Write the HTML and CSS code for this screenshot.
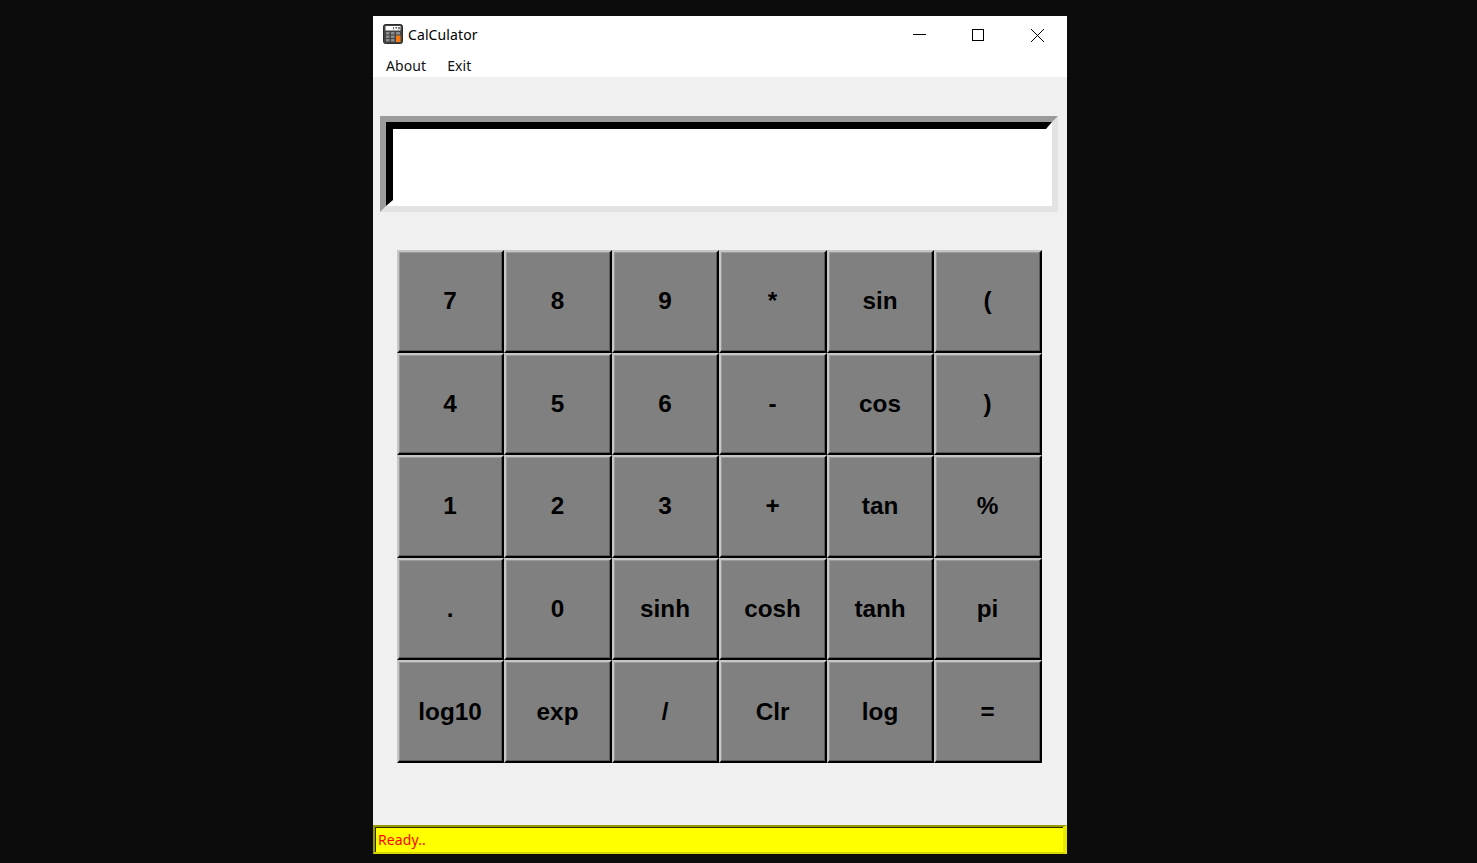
FILE: index.html
```html
<!DOCTYPE HTML>
<html>
<head>
<meta http-equiv="Content-Type" content="text/html; charset=utf-8">
<title>CalCulator</title>
<link rel="stylesheet" href="styles.css">
</head>
<body>
	<div id="window">
		<div id="titlebar">
			<svg class="appicon" width="20" height="20" viewBox="0 0 20 20">
				<rect x="0.5" y="0.5" width="19" height="19" rx="2" fill="#444" stroke="#2b2b2b"/>
				<rect x="2.5" y="2" width="15" height="4.5" fill="#fff"/>
				<path d="M10.5 3v2.5M12.5 3.5h1.5M13.2 3v2M15 3l2 2.5M17 3l-2 2.5" stroke="#333" stroke-width="0.7" fill="none"/>
				<rect x="3" y="8" width="3.5" height="2.5" fill="#8c8c8c"/>
				<rect x="8" y="8" width="3.5" height="2.5" fill="#8c8c8c"/>
				<rect x="13" y="8" width="4" height="2.5" fill="#8c8c8c"/>
				<rect x="3" y="11.5" width="3.5" height="2.5" fill="#8c8c8c"/>
				<rect x="8" y="11.5" width="3.5" height="2.5" fill="#8c8c8c"/>
				<rect x="3" y="15" width="3.5" height="2.5" fill="#8c8c8c"/>
				<rect x="8" y="15" width="3.5" height="2.5" fill="#8c8c8c"/>
				<rect x="13" y="11.5" width="4.5" height="6.5" fill="#f47a10"/>
			</svg>
			<span class="title">CalCulator</span>
			<div class="controls">
				<svg width="58" height="36" viewBox="0 0 58 36"><path d="M22 18.5h13" stroke="#000" fill="none"/></svg>
				<svg width="58" height="36" viewBox="0 0 58 36"><rect x="23.5" y="13.5" width="11" height="11" stroke="#000" fill="none"/></svg>
				<svg width="58" height="36" viewBox="0 0 58 36"><path d="M24 13l13 13M37 13l-13 13" stroke="#000" fill="none"/></svg>
			</div>
		</div>
		<ul id="menu">
			<li>About</li>
			<li>Exit</li>
		</ul>
		<div id="content">
			<div id="display"><div class="inner"></div></div>
			<div id="keys">
				<div class="button">7</div>
				<div class="button">8</div>
				<div class="button">9</div>
				<div class="button">*</div>
				<div class="button">sin</div>
				<div class="button">(</div>
				<div class="button">4</div>
				<div class="button">5</div>
				<div class="button">6</div>
				<div class="button">-</div>
				<div class="button">cos</div>
				<div class="button">)</div>
				<div class="button">1</div>
				<div class="button">2</div>
				<div class="button">3</div>
				<div class="button">+</div>
				<div class="button">tan</div>
				<div class="button">%</div>
				<div class="button">.</div>
				<div class="button">0</div>
				<div class="button">sinh</div>
				<div class="button">cosh</div>
				<div class="button">tanh</div>
				<div class="button">pi</div>
				<div class="button">log10</div>
				<div class="button">exp</div>
				<div class="button">/</div>
				<div class="button">Clr</div>
				<div class="button">log</div>
				<div class="button">=</div>
			</div>
		</div>
		<div id="status">Ready..</div>
	</div>
</body>
</html>
```

FILE: styles.css
```css
html,body{margin: 0;padding: 0;height: 100%;}
body{
	background: #0c0c0c;
	font-family: "Noto Sans","Open Sans",sans-serif;
	overflow: hidden;
}
#window{
	width: 694px;
	height: 838px;
	margin: 16px 0 0 373px;
	display: flex;
	flex-direction: column;
	background: #f0f0f0;
}
#titlebar{
	height: 36px;
	background: #fff;
	display: flex;
	align-items: center;
	padding: 0 1px 0 10px;
	font-size: 14px;
	letter-spacing: 0.1px;
	color: #000;
}
.appicon{margin-right: 5px;}
.controls{
	margin-left: auto;
	display: flex;
	height: 36px;
	padding-right: 1px;
}
.controls svg{display: block;}
#menu{
	height: 25px;
	margin: 0;
	padding: 0 0 0 13px;
	background: #fff;
	list-style: none;
	display: flex;
	gap: 21px;
	font-size: 14px;
	letter-spacing: 0.1px;
	line-height: 28px;
	color: #111;
}
#content{
	flex: 1;
	padding: 39px 9px 0 7px;
}
#display{
	height: 96px;
	box-sizing: border-box;
	border: 6px solid;
	border-color: #9b9b9b #e3e3e3 #e3e3e3 #9b9b9b;
}
#display .inner{
	height: 100%;
	box-sizing: border-box;
	background: #fff;
	border: solid;
	border-width: 7px 6px 6px 7px;
	border-color: #000 #fff #fff #000;
}
#keys{
	width: 645px;
	height: 513px;
	margin: 38px 0 0 16.8px;
	display: grid;
	grid-template-columns: repeat(6,1fr);
	grid-template-rows: repeat(5,1fr);
}
#keys .button{
	display: flex;
	align-items: center;
	justify-content: center;
	box-sizing: border-box;
	background: #808080;
	border: 2px solid;
	border-color: #c6c6c6 #000 #000 #c6c6c6;
	box-shadow: inset -1px -1px 0 #5a5a5a,inset 1px 1px 0 #9a9a9a;
	padding-right: 1px;
	font-family: "Liberation Sans",Arial,sans-serif;
	font-weight: bold;
	font-size: 24.3px;
	color: #000;
}
#status{
	height: 29px;
	box-sizing: border-box;
	background: #ffff00;
	border: solid;
	border-width: 2px 4px 2px 2px;
	border-color: #9a9a00 #e8e800 #d8d800 #9a9a00;
	box-shadow: inset 1px 1px 0 #2c2c00;
	padding-left: 3px;
	font-size: 14px;
	letter-spacing: 0.1px;
	line-height: 25px;
	color: #ff0000;
}
```
